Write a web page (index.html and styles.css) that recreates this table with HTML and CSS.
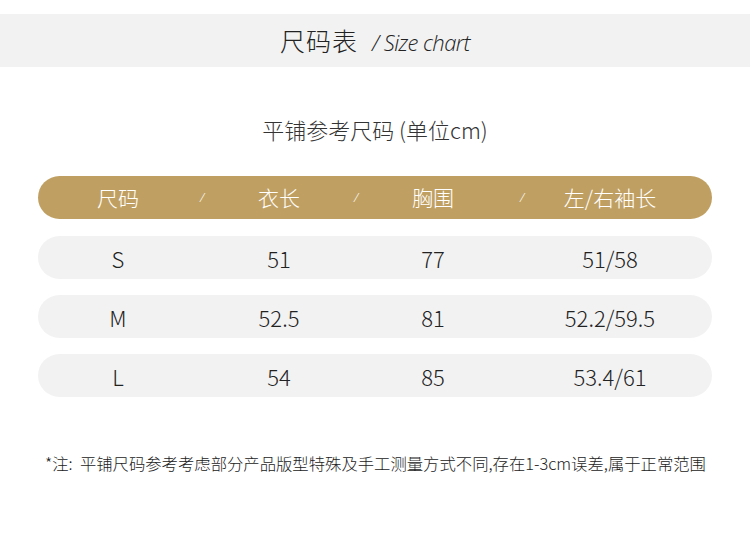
FILE: index.html
```html
<!DOCTYPE html>
<html lang="zh-CN">
<head>
<meta charset="utf-8">
<link rel="stylesheet" href="styles.css">
</head>
<body>
<div class="page">
  <div class="band">
    <span class="title">尺码表</span>
    <span class="title-en">/ Size chart</span>
  </div>
  <div class="subtitle">平铺参考尺码 (单位cm)</div>
  <div class="table">
    <div class="row head">
      <span class="c1">尺码</span><span class="s1">/</span>
      <span class="c2">衣长</span><span class="s2">/</span>
      <span class="c3">胸围</span><span class="s3">/</span>
      <span class="c4">左/右袖长</span>
    </div>
    <div class="row">
      <span class="c1">S</span><span class="c2">51</span><span class="c3">77</span><span class="c4">51/58</span>
    </div>
    <div class="row">
      <span class="c1">M</span><span class="c2">52.5</span><span class="c3">81</span><span class="c4">52.2/59.5</span>
    </div>
    <div class="row">
      <span class="c1">L</span><span class="c2">54</span><span class="c3">85</span><span class="c4">53.4/61</span>
    </div>
  </div>
  <div class="note">*注:&nbsp; 平铺尺码参考考虑部分产品版型特殊及手工测量方式不同,存在1-3cm误差,属于正常范围</div>
</div>
</body>
</html>
```
FILE: styles.css
```css
html, body {
  margin: 0;
  padding: 0;
  background: #fff;
}
.page {
  width: 750px;
  height: 541px;
  padding-top: 14px;
  box-sizing: border-box;
  font-family: "Noto Sans CJK SC", "Noto Sans", sans-serif;
  font-weight: 300;
  color: #222;
}
.band {
  height: 53px;
  background: #f2f2f2;
  display: flex;
  align-items: center;
  justify-content: center;
  gap: 14px;
}
.title {
  font-size: 25px;
  line-height: 1;
  color: #222;
  letter-spacing: 1px;
}
.title-en {
  font-family: "Open Sans", sans-serif;
  font-style: italic;
  font-weight: 300;
  font-size: 22px;
  letter-spacing: -0.6px;
  line-height: 1;
  padding-top: 3px;
}
.subtitle {
  margin-top: 47px;
  text-align: center;
  font-size: 22px;
  line-height: 30px;
  color: #333;
}
.table {
  margin: 32px 38px 0;
  display: flex;
  flex-direction: column;
  gap: 16px;
}
.row {
  height: 43px;
  border-radius: 22px;
  background: #f2f2f2;
  display: grid;
  grid-template-columns: 160px 8px 146px 8px 146px 12px 8px 168px;
  align-items: center;
  font-size: 22px;
  line-height: 1;
  text-align: center;
}
.row.head {
  background: #c0a062;
  color: #fff;
  font-size: 21px;
  margin-bottom: 1px;
}
.c1 { grid-column: 1; }
.s1 { grid-column: 2; }
.c2 { grid-column: 3; }
.s2 { grid-column: 4; }
.c3 { grid-column: 5; }
.s3 { grid-column: 7; }
.c4 { grid-column: 8; }
.s1, .s2, .s3 {
  font-size: 13px;
  font-family: "Open Sans", sans-serif;
  font-style: italic;
}
.note {
  margin-top: 55px;
  padding-left: 45px;
  font-size: 16.35px;
  line-height: 22px;
  color: #222;
  white-space: nowrap;
}
```
